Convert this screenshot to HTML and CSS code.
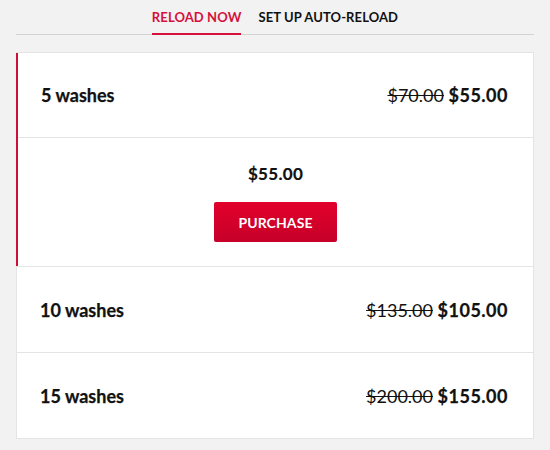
FILE: index.html
```html
<!DOCTYPE html>
<html lang="en">
<head>
<meta charset="utf-8">
<title>Reload</title>
<link rel="stylesheet" href="styles.css">
</head>
<body>
<div class="page">
  <nav class="tabs">
    <a class="tab active" href="#">RELOAD NOW</a>
    <a class="tab" href="#">SET UP AUTO-RELOAD</a>
  </nav>
  <div class="card">
    <div class="item open">
      <div class="row">
        <span class="name">5 washes</span>
        <span class="price"><s class="old">$70.00</s> <b class="new">$55.00</b></span>
      </div>
      <div class="detail">
        <div class="total">$55.00</div>
        <button class="buy">PURCHASE</button>
      </div>
    </div>
    <div class="item">
      <div class="row">
        <span class="name">10 washes</span>
        <span class="price"><s class="old">$135.00</s> <b class="new">$105.00</b></span>
      </div>
    </div>
    <div class="item">
      <div class="row">
        <span class="name">15 washes</span>
        <span class="price"><s class="old">$200.00</s> <b class="new">$155.00</b></span>
      </div>
    </div>
  </div>
</div>
</body>
</html>
```
FILE: styles.css
```css
html, body {
  margin: 0;
  padding: 0;
  background: #f2f2f2;
  font-family: "Lato", "Liberation Sans", sans-serif;
  color: #111;
}
.page {
  padding: 0 16px;
}
.tabs {
  display: flex;
  justify-content: center;
  gap: 17px;
  border-bottom: 1px solid #d2d2d2;
  height: 35px;
  box-sizing: border-box;
}
.tab {
  display: block;
  font-size: 13px;
  font-weight: 700;
  color: #111;
  text-decoration: none;
  padding-top: 9px;
  line-height: 16px;
  letter-spacing: 0.1px;
}
.tab.active {
  color: #d6103b;
  border-bottom: 2px solid #d6103b;
  box-sizing: border-box;
  height: 35px;
  margin-bottom: -1px;
}
.card {
  margin-top: 17px;
  background: #fff;
  border: 1px solid #e4e4e4;
}
.item + .item {
  border-top: 1px solid #e4e4e4;
}
.item.open {
  border-left: 2px solid #c8103a;
  margin-left: -1px;
}
.row {
  display: flex;
  justify-content: space-between;
  align-items: center;
  height: 85px;
  padding: 0 25px 0 23px;
  font-size: 18px;
}
.item.open .row {
  height: 84px;
  border-bottom: 1px solid #e4e4e4;
}
.name {
  font-weight: 700;
  -webkit-text-stroke: 0.25px currentColor;
}
.old {
  font-weight: 400;
}
.new {
  font-weight: 700;
  letter-spacing: 0.5px;
  -webkit-text-stroke: 0.25px currentColor;
}
.detail {
  display: flex;
  flex-direction: column;
  align-items: center;
  padding: 26px 0 24px;
}
.total {
  font-size: 17px;
  font-weight: 700;
  line-height: 20px;
  margin-bottom: 18px;
  letter-spacing: 0.3px;
  -webkit-text-stroke: 0.2px currentColor;
}
.buy {
  width: 123px;
  height: 40px;
  border: none;
  border-radius: 2px;
  background: linear-gradient(#e2002c, #c60029);
  color: #fff;
  font-family: inherit;
  font-size: 14px;
  font-weight: 700;
  letter-spacing: 0.1px;
}
```
